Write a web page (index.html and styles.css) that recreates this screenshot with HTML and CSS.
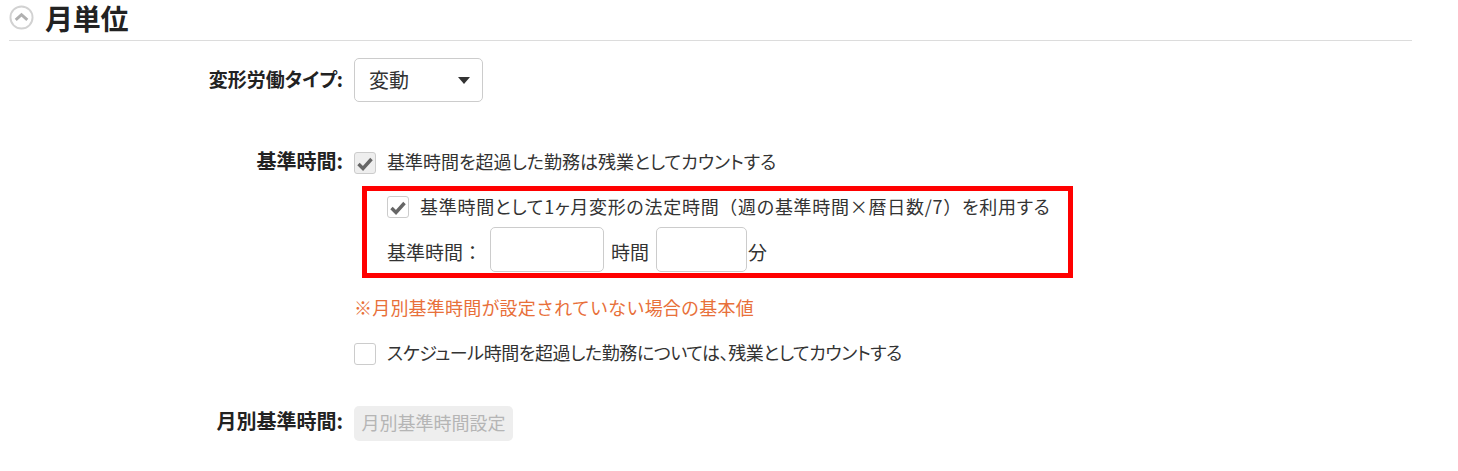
FILE: index.html
```html
<!DOCTYPE html>
<html lang="ja">
<head>
<meta charset="utf-8">
<title>月単位</title>
<link rel="stylesheet" href="styles.css">
</head>
<body>
<section class="section">
  <header class="head">
    <svg class="toggle" width="25" height="25" viewBox="0 0 26 26"><circle cx="13" cy="13" r="11.5" fill="#fff" stroke="#d2d2d2" stroke-width="2"/><path d="M7 15.5 L13 10 L19 15.5" fill="none" stroke="#b0b0b0" stroke-width="3"/></svg>
    <h2 class="title">月単位</h2>
  </header>
  <div class="row row-type">
    <div class="label">変形労働タイプ:</div>
    <div class="body">
      <div class="select"><span class="select-text">変動</span><i class="caret"></i></div>
    </div>
  </div>
  <div class="row row-base">
    <div class="label label-big label-check">基準時間:</div>
    <div class="body">
      <label class="check-line">
        <span class="check on"><svg width="18" height="15" viewBox="0 0 18 15"><path d="M2.5 8 L7 12.5 L15.5 3" fill="none" stroke="#666" stroke-width="3.4"/></svg></span>
        <span>基準時間を超過した勤務は残業としてカウントする</span>
      </label>
      <div class="redbox">
        <label class="check-line">
          <span class="check white"><svg width="18" height="15" viewBox="0 0 18 15"><path d="M2.5 8 L7 12.5 L15.5 3" fill="none" stroke="#666" stroke-width="3.4"/></svg></span>
          <span class="long">基準時間として1ヶ月変形の法定時間<span class="full">（</span>週の基準時間×暦日数/7<span class="full">）</span>を利用する</span>
        </label>
        <div class="time-line">
          <span class="t-label">基準時間：</span>
          <span class="input w-hour"></span>
          <span class="t-unit">時間</span>
          <span class="input w-min"></span>
          <span class="t-min">分</span>
        </div>
      </div>
      <p class="note">※月別基準時間が設定されていない場合の基本値</p>
      <label class="check-line sched">
        <span class="check white"></span>
        <span class="sched-text">スケジュール時間を超過した勤務については、残業としてカウントする</span>
      </label>
    </div>
  </div>
  <div class="row row-month">
    <div class="label label-big">月別基準時間:</div>
    <div class="body"><span class="btn">月別基準時間設定</span></div>
  </div>
</section>
</body>
</html>
```
FILE: styles.css
```css
html, body { margin: 0; padding: 0; background: #fff; }
body {
  width: 1458px;
  height: 471px;
  overflow: hidden;
  font-family: "Noto Sans CJK JP", "Noto Sans", sans-serif;
  font-size: 18px;
  color: #333;
  font-feature-settings: "palt";
}
.section { width: 1403px; margin-left: 9px; }
.head {
  display: flex;
  align-items: center;
  gap: 11px;
  height: 35px;
  border-bottom: 1px solid #dcdcdc;
  padding-bottom: 5px;
}
.toggle { flex: none; }
.title { margin: 0; padding-top: 1px; font-size: 28px; line-height: 34px; font-weight: 700; color: #222; letter-spacing: -0.2px; }
.row { display: flex; align-items: flex-start; }
.label {
  width: 334px;
  flex: none;
  text-align: right;
  font-weight: 700;
  color: #222;
  font-size: 19px;
}
.label-big { font-size: 20px; }
.body { margin-left: 11px; }
.row-type { margin-top: 17px; }
.row-type .label { line-height: 42px; }
.select {
  width: 129px;
  height: 44px;
  box-sizing: border-box;
  border: 1px solid #ccc;
  border-radius: 5px;
  display: flex;
  align-items: center;
  justify-content: space-between;
  padding: 0 12px 0 14px;
  font-size: 20px;
}
.select-text { line-height: 30px; }
.caret { border: 6px solid transparent; border-top: 7px solid #333; border-bottom: 0; }
.row-base { margin-top: 50px; }
.label-check { line-height: 18px; }
.check-line { display: flex; align-items: flex-start; gap: 11px; line-height: 18px; }
.check {
  width: 22px;
  height: 22px;
  box-sizing: border-box;
  border: 1px solid #ccc;
  border-radius: 3px;
  display: flex;
  align-items: center;
  justify-content: center;
  flex: none;
}
.check.on { background: #eee; }
.check.white { background: #fff; }
.long { letter-spacing: 0.72px; margin-top: 1px; }
.full { font-feature-settings: normal; }
.redbox {
  width: 711px;
  height: 92px;
  box-sizing: border-box;
  border: 5px solid #f00;
  margin: 12px 0 0 8px;
  padding: 5px 0 0 20px;
}
.time-line { display: flex; align-items: center; margin-top: 9px; height: 45px; font-size: 19px; }
.t-label { width: 103px; flex: none; font-feature-settings: normal; padding-top: 4px; }
.t-unit { margin: 0 7px; padding-top: 4px; }
.t-min { padding-top: 4px; margin-left: 1px; }
.input {
  display: block;
  height: 45px;
  box-sizing: border-box;
  border: 1px solid #ccc;
  border-radius: 5px;
  background: #fff;
}
.w-hour { width: 114px; }
.w-min { width: 91px; }
.note { margin: 17px 0 0; color: #e8703a; line-height: 24px; font-feature-settings: normal; letter-spacing: 0.2px; }
.sched { margin-top: 24px; }
.sched-text { letter-spacing: -0.42px; }
.row-month { margin-top: 41px; }
.row-month .label { line-height: 29px; }
.btn {
  display: block;
  height: 35px;
  line-height: 33px;
  padding: 0 7.5px;
  background: #eee;
  border-radius: 5px;
  color: #b5b5b5;
  font-size: 18px;
  font-feature-settings: normal;
}
```
